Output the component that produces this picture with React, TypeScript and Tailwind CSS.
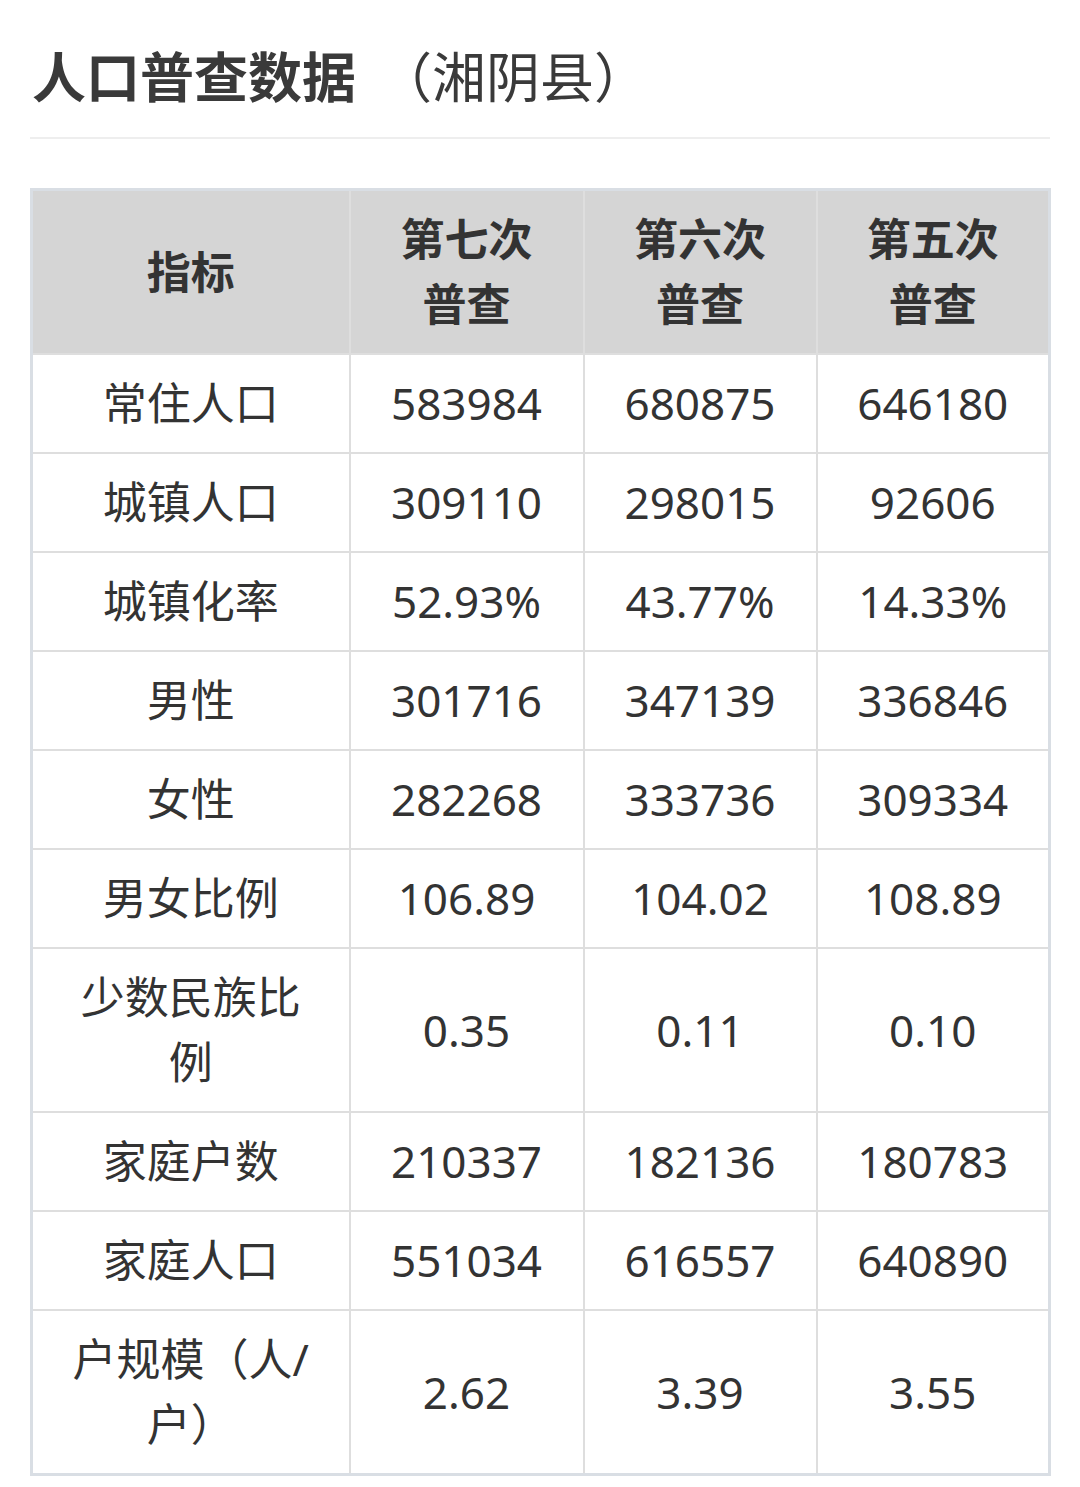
import React from "react";

const rows: { label: string; v: [string, string, string] }[] = [
  { label: "常住人口", v: ["583984", "680875", "646180"] },
  { label: "城镇人口", v: ["309110", "298015", "92606"] },
  { label: "城镇化率", v: ["52.93%", "43.77%", "14.33%"] },
  { label: "男性", v: ["301716", "347139", "336846"] },
  { label: "女性", v: ["282268", "333736", "309334"] },
  { label: "男女比例", v: ["106.89", "104.02", "108.89"] },
  { label: "少数民族比例", v: ["0.35", "0.11", "0.10"] },
  { label: "家庭户数", v: ["210337", "182136", "180783"] },
  { label: "家庭人口", v: ["551034", "616557", "640890"] },
  { label: "户规模（人/户）", v: ["2.62", "3.39", "3.55"] },
];

const font = { fontFamily: '"Noto Sans", "Noto Sans CJK SC", sans-serif' };

export default function App() {
  return (
    <div className="w-[1080px] min-h-[1487px] bg-white px-[30px] pt-[42px] text-[#333333]" style={font}>
      <h1 className="flex items-baseline pl-[2px] text-[54px] leading-[70px] text-[#3a3a3a]">
        <span className="font-bold">人口普查数据</span>
        <span className="ml-[22px] font-normal">（湘阴县）</span>
      </h1>
      <div className="mt-[25px] h-[2px] bg-[#eeeeee]" />
      <table className="mt-[49px] w-[1020px] table-fixed border-collapse border-[3px] border-[#d9dee4] text-center">
        <colgroup>
          <col className="w-[318px]" />
          <col className="w-[234px]" />
          <col className="w-[233px]" />
          <col className="w-[233px]" />
        </colgroup>
        <thead>
          <tr className="bg-[#d5d5d5]">
            {["指标", "第七次普查", "第六次普查", "第五次普查"].map((h) => (
              <th
                key={h}
                className="border-2 border-[#dedede] px-[30px] py-[16px] text-[44px] font-bold leading-[65px] text-[#333333]"
              >
                {h === "指标" ? h : (
                  <>
                    {h.slice(0, 3)}
                    <br />
                    {h.slice(3)}
                  </>
                )}
              </th>
            ))}
          </tr>
        </thead>
        <tbody>
          {rows.map((r) => (
            <tr key={r.label}>
              <td className="border-2 border-[#dedede] px-[30px] py-[16px] text-[44px] leading-[65px]">
                {r.label}
              </td>
              {r.v.map((x, i) => (
                <td key={i} className="border-2 border-[#dedede] px-[20px] py-[16px] text-[44px] leading-[65px]">
                  {x}
                </td>
              ))}
            </tr>
          ))}
        </tbody>
      </table>
    </div>
  );
}
